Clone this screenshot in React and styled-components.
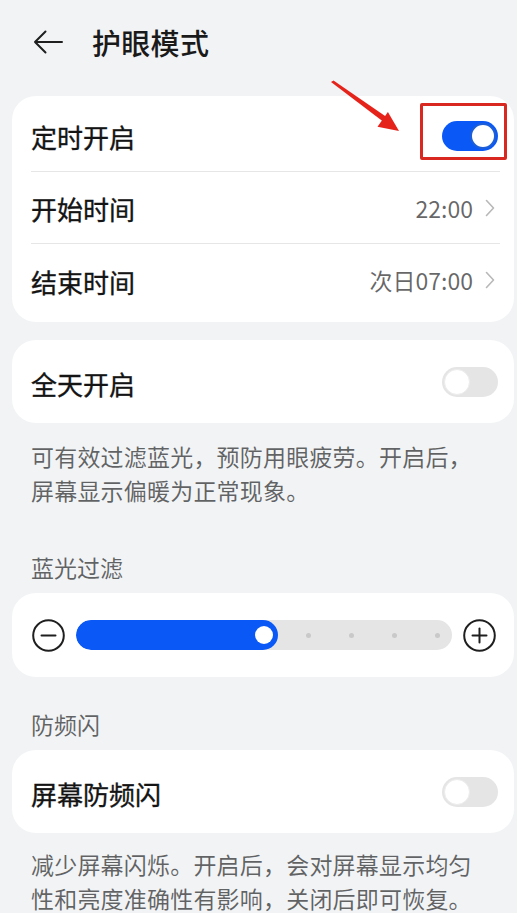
import React from "react";
import styled, { createGlobalStyle } from "styled-components";

const Global = createGlobalStyle`
  html, body { margin: 0; padding: 0; background: #f1f3f5; }
  body { font-family: "Noto Sans CJK SC", "Noto Sans", sans-serif; }
  * { box-sizing: border-box; }
`;

const Page = styled.div`
  position: relative;
  width: 517px;
  min-height: 913px;
  padding: 0 3px 0 12px;
  background: #f1f3f5;
  overflow: hidden;
`;

const Header = styled.header`
  display: flex;
  align-items: center;
  gap: 29px;
  height: 84px;
  padding-left: 21px;
`;

const Title = styled.h1`
  margin: 0;
  font-size: 29px;
  font-weight: 500;
  color: #1a1a1a;
  letter-spacing: 0.3px;
`;

const Card = styled.section`
  background: #ffffff;
  border-radius: 24px;
  padding: ${(p) => p.$pad || "4px 0 6px"};
  margin-top: ${(p) => p.$mt || 0}px;
`;

const Row = styled.div`
  display: flex;
  align-items: center;
  justify-content: space-between;
  height: 72px;
  margin: 0 14px 0 19px;
  padding-right: 2px;
  border-bottom: ${(p) => (p.$divider ? "1px solid #e6e6e6" : "none")};
`;

const Label = styled.span`
  font-size: 26px;
  font-weight: 400;
  color: #141414;
  padding-top: 2px;
  -webkit-text-stroke: 0.35px #141414;
`;

const Value = styled.span`
  display: flex;
  align-items: center;
  gap: 12px;
  font-size: 23px;
  color: rgba(0, 0, 0, 0.6);
  padding-right: 3px;
`;

const Switch = styled.span`
  display: flex;
  align-items: center;
  justify-content: ${(p) => (p.$on ? "flex-end" : "flex-start")};
  width: 56px;
  height: 30px;
  padding: 2px;
  border-radius: 15px;
  background: ${(p) => (p.$on ? "#0a59f7" : "#e5e5e5")};
`;

const Knob = styled.span`
  width: 26px;
  height: 26px;
  border-radius: 50%;
  background: #ffffff;
  border: ${(p) => (p.$on ? "2px solid #1f5fd6" : "1px solid #ececec")};
`;

const Desc = styled.p`
  margin: 0;
  padding: ${(p) => p.$pad || "16px 0 0"};
  margin-left: 19px;
  width: 452px;
  font-size: 23px;
  line-height: 34px;
  color: rgba(0, 0, 0, 0.6);
  letter-spacing: 0.2px;
`;

const SectionLabel = styled.div`
  margin: ${(p) => p.$mt}px 0 9px 19px;
  font-size: 23px;
  line-height: 34px;
  color: rgba(0, 0, 0, 0.6);
`;

const SliderRow = styled.div`
  display: flex;
  align-items: center;
  gap: 11px;
  height: 84px;
  padding: 0 18px 0 20px;
`;

const Track = styled.div`
  flex: 1;
  display: flex;
  height: 30px;
  border-radius: 15px;
  background: #e5e5e5;
  overflow: hidden;
`;

const Fill = styled.div`
  display: flex;
  align-items: center;
  justify-content: flex-end;
  padding-right: 5px;
  height: 100%;
  border-radius: 15px;
  background: #0a59f7;
`;

const Thumb = styled.span`
  width: 18px;
  height: 18px;
  border-radius: 50%;
  background: #ffffff;
`;

const Dots = styled.div`
  flex: 1;
  display: flex;
  align-items: center;
  justify-content: space-between;
  padding: 0 12px 0 28px;
`;

const Dot = styled.span`
  width: 5px;
  height: 5px;
  border-radius: 50%;
  background: #c9c9c9;
`;

const RedBox = styled.div`
  position: absolute;
  left: 420px;
  top: 103px;
  width: 87px;
  height: 57px;
  border: 3px solid #d8281f;
  border-radius: 2px;
  pointer-events: none;
`;

const ArrowSvg = styled.svg`
  position: absolute;
  left: 0;
  top: 0;
  pointer-events: none;
`;

const BackIcon = () => (
  <svg width="30" height="24" viewBox="0 0 30 24" fill="none">
    <path d="M29 12H2M12.5 1.5L2 12l10.5 10.5" stroke="#1f1f1f" strokeWidth="2" strokeLinecap="round" strokeLinejoin="round" />
  </svg>
);

const Chevron = () => (
  <svg width="10" height="18" viewBox="0 0 10 18" fill="none">
    <path d="M1.5 1.5L8.5 9l-7 7.5" stroke="#b8b8b8" strokeWidth="1.6" strokeLinecap="round" strokeLinejoin="round" />
  </svg>
);

const CircleIcon = ({ plus }) => (
  <svg width="33" height="33" viewBox="0 0 33 33" fill="none">
    <circle cx="16.5" cy="16.5" r="15.3" stroke="#1f1f1f" strokeWidth="2" />
    <path d="M9.5 16.5h14" stroke="#1f1f1f" strokeWidth="2" strokeLinecap="round" />
    {plus && <path d="M16.5 9.5v14" stroke="#1f1f1f" strokeWidth="2" strokeLinecap="round" />}
  </svg>
);

export default function App() {
  return (
    <>
      <Global />
      <Page>
        <Header>
          <BackIcon />
          <Title>护眼模式</Title>
        </Header>

        <Card $mt={12}>
          <Row $divider>
            <Label>定时开启</Label>
            <Switch $on>
              <Knob $on />
            </Switch>
          </Row>
          <Row $divider>
            <Label>开始时间</Label>
            <Value>
              22:00
              <Chevron />
            </Value>
          </Row>
          <Row>
            <Label>结束时间</Label>
            <Value>
              次日07:00
              <Chevron />
            </Value>
          </Row>
        </Card>

        <Card $mt={18} $pad="6px 0 5px">
          <Row>
            <Label>全天开启</Label>
            <Switch>
              <Knob />
            </Switch>
          </Row>
        </Card>
        <Desc>可有效过滤蓝光，预防用眼疲劳。开启后，屏幕显示偏暖为正常现象。</Desc>

        <SectionLabel $mt={43}>蓝光过滤</SectionLabel>
        <Card $pad="0">
          <SliderRow>
            <CircleIcon />
            <Track>
              <Fill style={{ width: "53.8%" }}>
                <Thumb />
              </Fill>
              <Dots>
                <Dot />
                <Dot />
                <Dot />
                <Dot />
              </Dots>
            </Track>
            <CircleIcon plus />
          </SliderRow>
        </Card>

        <SectionLabel $mt={30}>防频闪</SectionLabel>
        <Card $pad="6px 0 5px">
          <Row>
            <Label>屏幕防频闪</Label>
            <Switch>
              <Knob />
            </Switch>
          </Row>
        </Card>
        <Desc $pad="14px 0 0">减少屏幕闪烁。开启后，会对屏幕显示均匀性和亮度准确性有影响，关闭后即可恢复。</Desc>

        <RedBox />
        <ArrowSvg width="517" height="200" viewBox="0 0 517 200">
          <polygon points="331,82 333.5,80.5 388,118 385,123" fill="#e5231b" />
          <polygon points="399,131 377.5,126.7 387.9,112.1" fill="#e5231b" />
        </ArrowSvg>
      </Page>
    </>
  );
}
